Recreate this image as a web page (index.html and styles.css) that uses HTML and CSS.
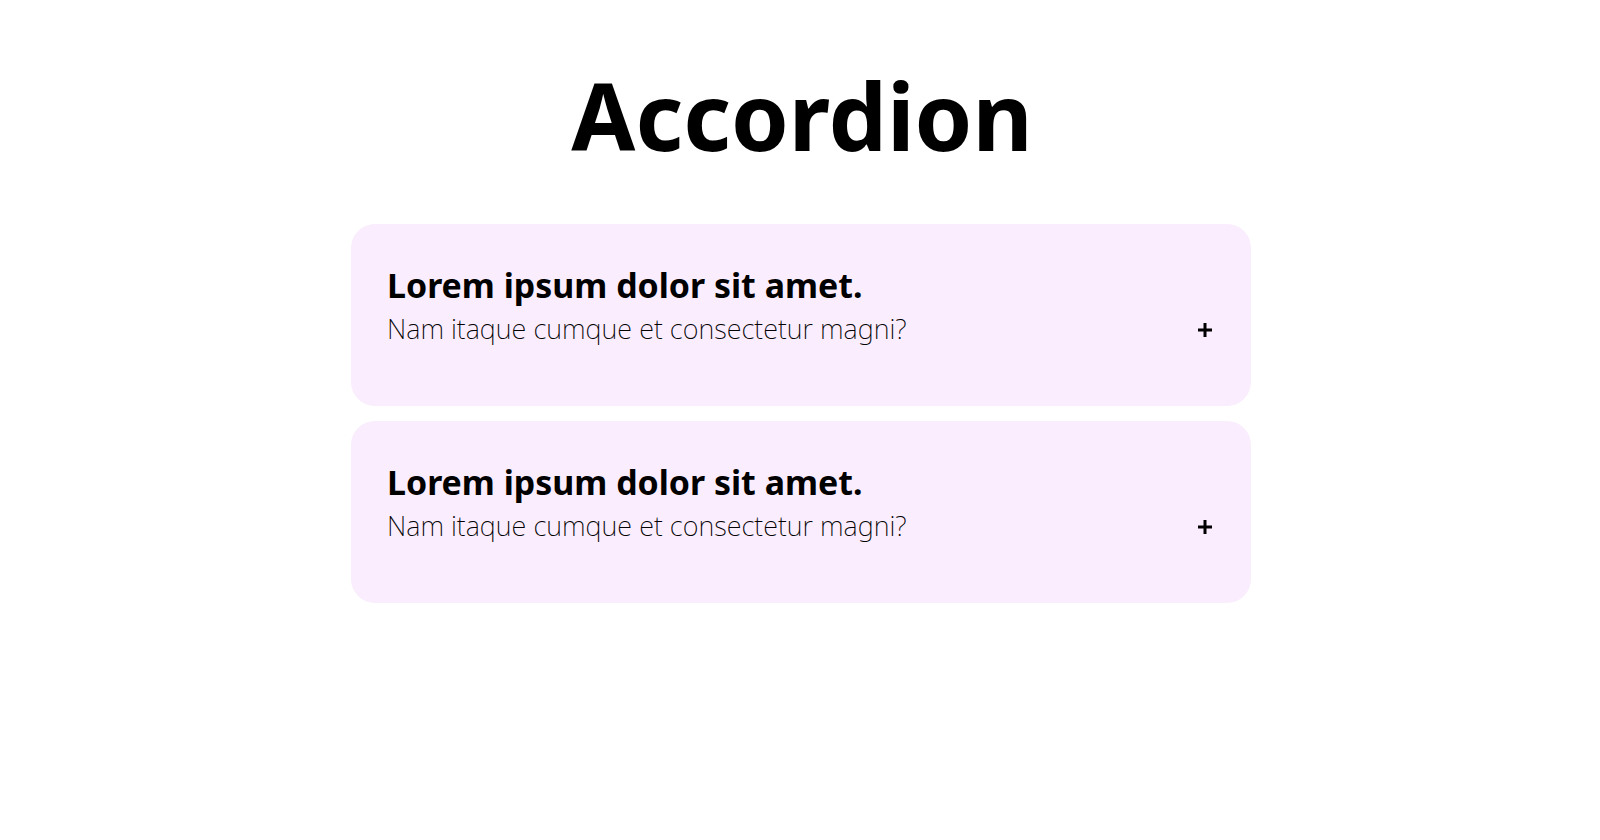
FILE: index.html
```html
<!DOCTYPE html>
<html lang="en">
<head>
<meta charset="utf-8">
<title>Accordion</title>
<link rel="stylesheet" href="styles.css">
</head>
<body>
<main class="page">
  <h1 class="title">Accordion</h1>
  <section class="accordion">
    <div class="item">
      <h2 class="item-title">Lorem ipsum dolor sit amet.</h2>
      <div class="item-row">
        <p class="item-sub">Nam itaque cumque et consectetur magni?</p>
        <span class="toggle" aria-hidden="true">
          <svg width="14" height="14" viewBox="0 0 14 14"><rect x="0" y="5.5" width="14" height="3" fill="#000"/><rect x="5.5" y="0" width="3" height="14" fill="#000"/></svg>
        </span>
      </div>
    </div>
    <div class="item">
      <h2 class="item-title">Lorem ipsum dolor sit amet.</h2>
      <div class="item-row">
        <p class="item-sub">Nam itaque cumque et consectetur magni?</p>
        <span class="toggle" aria-hidden="true">
          <svg width="14" height="14" viewBox="0 0 14 14"><rect x="0" y="5.5" width="14" height="3" fill="#000"/><rect x="5.5" y="0" width="3" height="14" fill="#000"/></svg>
        </span>
      </div>
    </div>
  </section>
</main>
</body>
</html>
```
FILE: styles.css
```css
* { box-sizing: border-box; }
html, body { margin: 0; padding: 0; background: #ffffff; }
body {
  font-family: "Noto Sans", "Open Sans", sans-serif;
  color: #000;
}
.page {
  padding-top: 52px;
  padding-left: 2px;
}
.title {
  margin: 0 0 46px;
  padding-left: 2px;
  text-align: center;
  font-size: 92.6px;
  font-weight: 700;
  line-height: normal;
}
.accordion {
  width: 900px;
  margin: 0 auto;
  display: flex;
  flex-direction: column;
  gap: 15px;
}
.item {
  background: #faedfd;
  border-radius: 24px;
  padding: 38px 36px 59px 36px;
  display: flex;
  flex-direction: column;
  gap: 2px;
}
.item-title {
  margin: 0;
  font-size: 33.9px;
  font-weight: 700;
  line-height: normal;
}
.item-row {
  display: flex;
  align-items: center;
  justify-content: space-between;
}
.item-sub {
  margin: 0;
  font-size: 27.1px;
  font-weight: 250;
  line-height: normal;
}
.toggle {
  display: flex;
  margin-right: 3px;
  margin-top: 3px;
}
```
